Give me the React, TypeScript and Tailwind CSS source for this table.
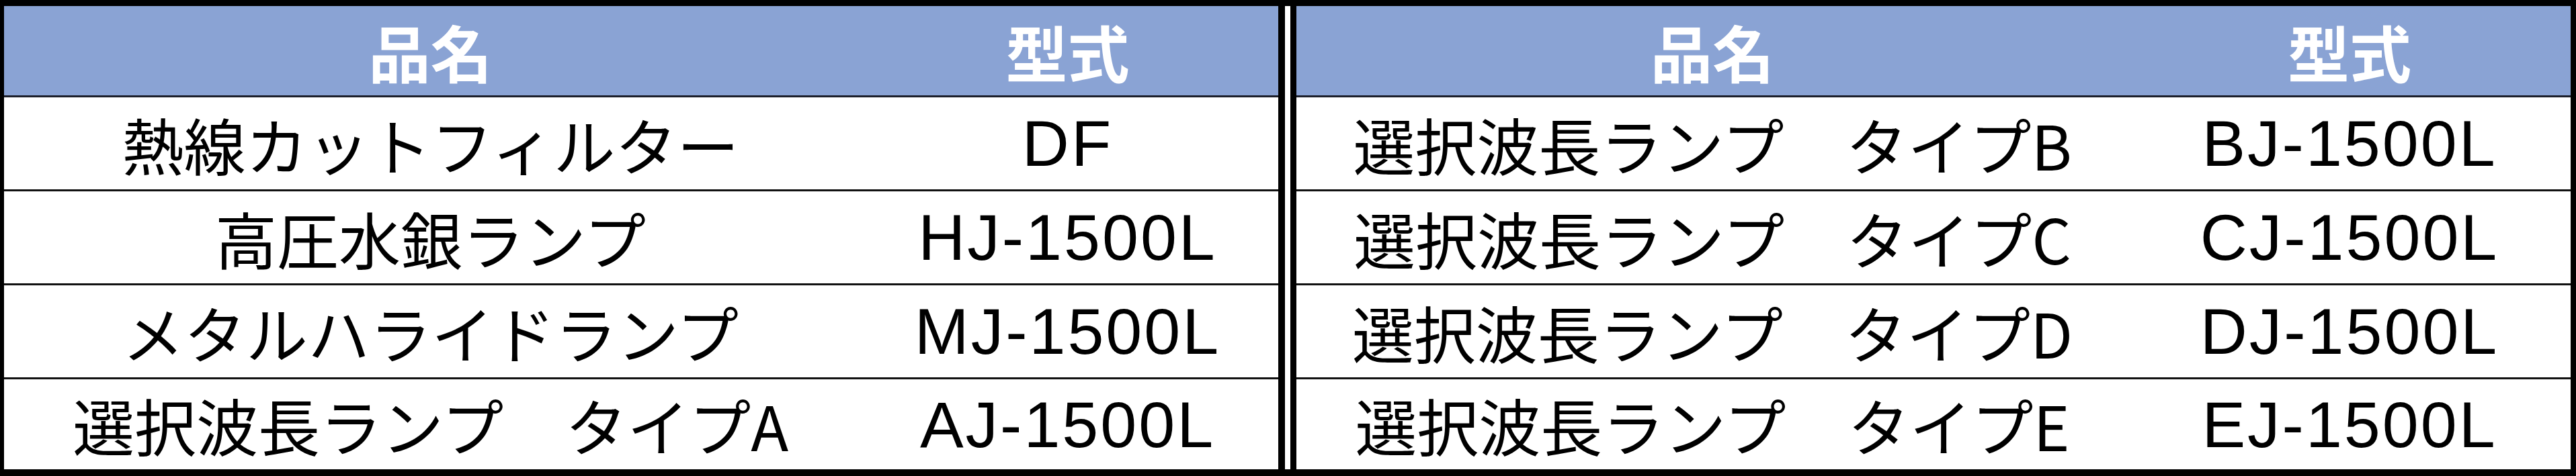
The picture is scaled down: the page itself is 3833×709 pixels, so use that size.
const left = [
  { name: "熱線カットフィルター", model: "DF" },
  { name: "高圧水銀ランプ", model: "HJ-1500L" },
  { name: "メタルハライドランプ", model: "MJ-1500L" },
  { name: "選択波長ランプ　タイプA", model: "AJ-1500L" },
]

const right = [
  { name: "選択波長ランプ　タイプB", model: "BJ-1500L" },
  { name: "選択波長ランプ　タイプC", model: "CJ-1500L" },
  { name: "選択波長ランプ　タイプD", model: "DJ-1500L" },
  { name: "選択波長ランプ　タイプE", model: "EJ-1500L" },
]

const jp = "font-['Noto_Sans_CJK_JP',sans-serif]"
const latin = "font-['Liberation_Sans',Arial,sans-serif]"

function Table({
  rows,
  nameCol,
  className,
}: {
  rows: { name: string; model: string }[]
  nameCol: string
  className: string
}) {
  return (
    <div className={`flex flex-col border-black ${className}`}>
      <div className={`grid ${nameCol} h-[136px] bg-[#8aa3d4] border-b-[3px] border-[#1c1f2a]`}>
        <div className={`flex items-center justify-center text-white font-bold text-[92px] leading-none ${jp}`}>品名</div>
        <div className={`flex items-center justify-center text-white font-bold text-[92px] leading-none ${jp}`}>型式</div>
      </div>
      {rows.map((r, i) => (
        <div
          key={r.model}
          className={`grid ${nameCol} ${i < rows.length - 1 ? "h-[140px] border-b-[3px] border-[#111]" : "h-[134px]"}`}
        >
          <div className={`flex items-center justify-center text-black text-[92px] leading-none whitespace-nowrap ${jp}`}>
            {r.name}
          </div>
          <div className={`flex items-center justify-center text-black text-[97px] leading-none tracking-[3px] ${latin}`}>
            {r.model}
          </div>
        </div>
      ))}
    </div>
  )
}

export default function App() {
  return (
    <div className="w-[3833px] h-[709px] bg-white border-t-[9px] border-b-[10px] border-black flex">
      <Table rows={left} nameCol="grid-cols-[1269px_1fr]" className="w-[1912px] border-l-[6px] border-r-[10px]" />
      <div className="w-[8px] bg-white" />
      <Table rows={right} nameCol="grid-cols-[1238px_1fr]" className="w-[1913px] border-l-[9px] border-r-[8px]" />
    </div>
  )
}
